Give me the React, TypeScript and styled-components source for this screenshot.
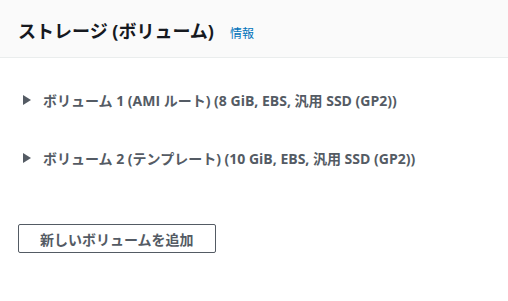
import React from "react";
import styled, { createGlobalStyle } from "styled-components";

const GlobalStyle = createGlobalStyle`
  body {
    margin: 0;
    background: #ffffff;
    font-family: "Open Sans", "Noto Sans CJK JP", sans-serif;
  }
`;

const Panel = styled.div`
  width: 508px;
  height: 301px;
  background: #ffffff;
`;

const Header = styled.div`
  display: flex;
  align-items: baseline;
  gap: 16px;
  height: 58px;
  box-sizing: border-box;
  padding: 19px 18px 0;
  background: #fafafa;
  border-bottom: 1px solid #eaeded;
`;

const Title = styled.h2`
  margin: 0;
  font-size: 18px;
  font-weight: 700;
  line-height: 24px;
  color: #16191f;
`;

const InfoLink = styled.a`
  font-size: 12px;
  color: #0073bb;
  text-decoration: none;
`;

const Body = styled.div`
  display: flex;
  flex-direction: column;
  padding: 26px 18px 0;
`;

const VolumeRow = styled.div`
  display: flex;
  align-items: center;
  gap: 12px;
  height: 32px;
  margin-bottom: 26px;
  padding-left: 5px;
  font-size: 14px;
  font-weight: 700;
  color: #545b64;
`;

const Caret = styled.span`
  width: 0;
  height: 0;
  margin-top: -1px;
  border-top: 5px solid transparent;
  border-bottom: 5px solid transparent;
  border-left: 8px solid #545b64;
`;

const AddButton = styled.button`
  align-self: flex-start;
  margin-top: 24px;
  height: 29px;
  padding: 0 21px;
  background: #ffffff;
  border: 1px solid #545b64;
  border-radius: 2px;
  font-family: inherit;
  font-size: 14px;
  font-weight: 700;
  color: #545b64;
`;

const volumes = [
  "ボリューム 1 (AMI ルート) (8 GiB, EBS, 汎用 SSD (GP2))",
  "ボリューム 2 (テンプレート) (10 GiB, EBS, 汎用 SSD (GP2))",
];

const App = () => {
  return (
    <Panel>
      <GlobalStyle />
      <Header>
        <Title>ストレージ (ボリューム)</Title>
        <InfoLink href="#">情報</InfoLink>
      </Header>
      <Body>
        {volumes.map((v) => (
          <VolumeRow key={v}>
            <Caret />
            {v}
          </VolumeRow>
        ))}
        <AddButton>新しいボリュームを追加</AddButton>
      </Body>
    </Panel>
  );
};

export default App;
